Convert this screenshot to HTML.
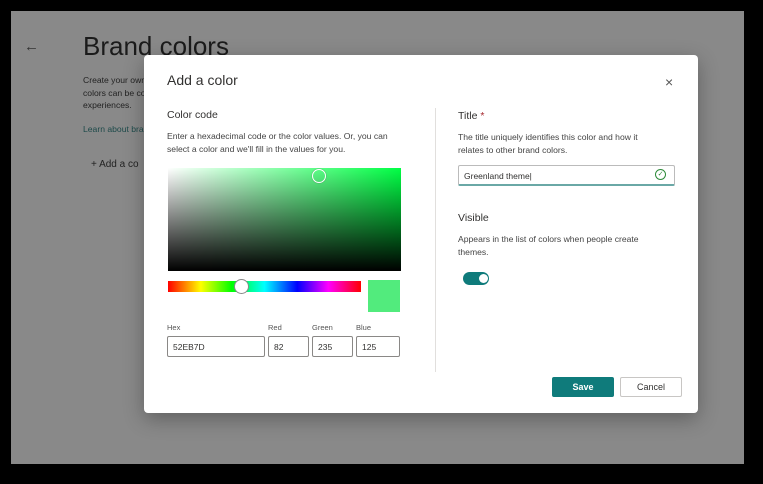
<!DOCTYPE html>
<html><head><style>
*{margin:0;padding:0;box-sizing:border-box}
body{width:763px;height:484px;background:#000;position:relative;overflow:hidden;font-family:"Liberation Sans",sans-serif;color:#323130}
.a{position:absolute}
.bg{left:11px;top:11px;width:733px;height:453px;background:#898989}
.m{left:144px;top:55px;width:554px;height:358px;background:#fff;border-radius:4px;box-shadow:0 6px 20px rgba(0,0,0,.3)}
.s{font-size:8.6px;color:#444;line-height:12.5px}
.lbl{font-size:7.5px;color:#555}
.in{border:1px solid #8a8886;border-radius:2px;height:21px;font-size:8.5px;padding:5px 5px;color:#323130;background:#fff}
</style></head><body>
<div class="a bg"></div>
<div class="a" style="left:24px;top:38px;font-size:15px;color:#333">←</div>
<div class="a" style="left:83px;top:31px;font-size:26px;color:#1b1b1b">Brand colors</div>
<div class="a s" style="left:83px;top:74px;width:70px;color:#222">Create your own colors can be co experiences.</div>
<div class="a s" style="left:83px;top:123px;color:#1d4a4a">Learn about bra</div>
<div class="a" style="left:91px;top:159px;font-size:10px;color:#222">+ Add a co</div>

<div class="a m">
<div class="a" style="left:23px;top:17px;font-size:14px;color:#323130">Add a color</div>
<div class="a" style="left:521px;top:19px;font-size:14px;color:#555">×</div>
<div class="a" style="left:23px;top:54px;font-size:10.5px">Color code</div>
<div class="a s" style="left:23px;top:75px;width:236px">Enter a hexadecimal code or the color values. Or, you can select a color and we'll fill in the values for you.</div>
<div class="a" style="left:24px;top:113px;width:233px;height:103px;background:linear-gradient(to top,#000,rgba(0,0,0,0)),linear-gradient(to right,#fff,#00ff44)"></div>
<div class="a" style="left:168px;top:114px;width:14px;height:14px;border:1.5px solid #fff;border-radius:50%;box-shadow:0 0 1px #555"></div>
<div class="a" style="left:24px;top:226px;width:193px;height:11px;background:linear-gradient(to right,#f00,#ff0 17%,#0f0 33%,#0ff 50%,#00f 67%,#f0f 83%,#f00)"></div>
<div class="a" style="left:90px;top:224px;width:15px;height:15px;border-radius:50%;background:#fff;border:1px solid #888"></div>
<div class="a" style="left:224px;top:225px;width:32px;height:32px;background:#52eb7d"></div>
<div class="a lbl" style="left:23px;top:268px">Hex</div>
<div class="a lbl" style="left:124px;top:268px">Red</div>
<div class="a lbl" style="left:168px;top:268px">Green</div>
<div class="a lbl" style="left:212px;top:268px">Blue</div>
<div class="a in" style="left:23px;top:281px;width:98px">52EB7D</div>
<div class="a in" style="left:124px;top:281px;width:41px">82</div>
<div class="a in" style="left:168px;top:281px;width:41px">235</div>
<div class="a in" style="left:212px;top:281px;width:44px">125</div>
<div class="a" style="left:291px;top:53px;width:1px;height:264px;background:#e1dfdd"></div>
<div class="a" style="left:314px;top:55px;font-size:10.5px">Title <span style="color:#a4262c">*</span></div>
<div class="a s" style="left:314px;top:76px;width:200px">The title uniquely identifies this color and how it relates to other brand colors.</div>
<div class="a in" style="left:314px;top:110px;width:217px;border-color:#bbb;border-bottom:2px solid #6aa8a6">Greenland theme|</div>
<div class="a" style="left:511px;top:114px;width:11px;height:11px;border:1px solid #2e8b3a;border-radius:50%;font-size:7px;color:#2e8b3a;text-align:center;line-height:9px">✓</div>
<div class="a" style="left:314px;top:157px;font-size:10.5px">Visible</div>
<div class="a s" style="left:314px;top:178px;width:200px">Appears in the list of colors when people create themes.</div>
<div class="a" style="left:319px;top:217px;width:26px;height:13px;border-radius:7px;background:#0f7b7b"></div>
<div class="a" style="left:335px;top:219px;width:9px;height:9px;border-radius:50%;background:#fff"></div>
<div class="a" style="left:408px;top:322px;width:62px;height:20px;background:#0f7b7b;border-radius:2px;color:#fff;font-size:9px;font-weight:bold;text-align:center;line-height:20px">Save</div>
<div class="a" style="left:476px;top:322px;width:62px;height:20px;border:1px solid #c8c6c4;border-radius:2px;font-size:9px;text-align:center;line-height:18px">Cancel</div>
</div>
</body></html>
